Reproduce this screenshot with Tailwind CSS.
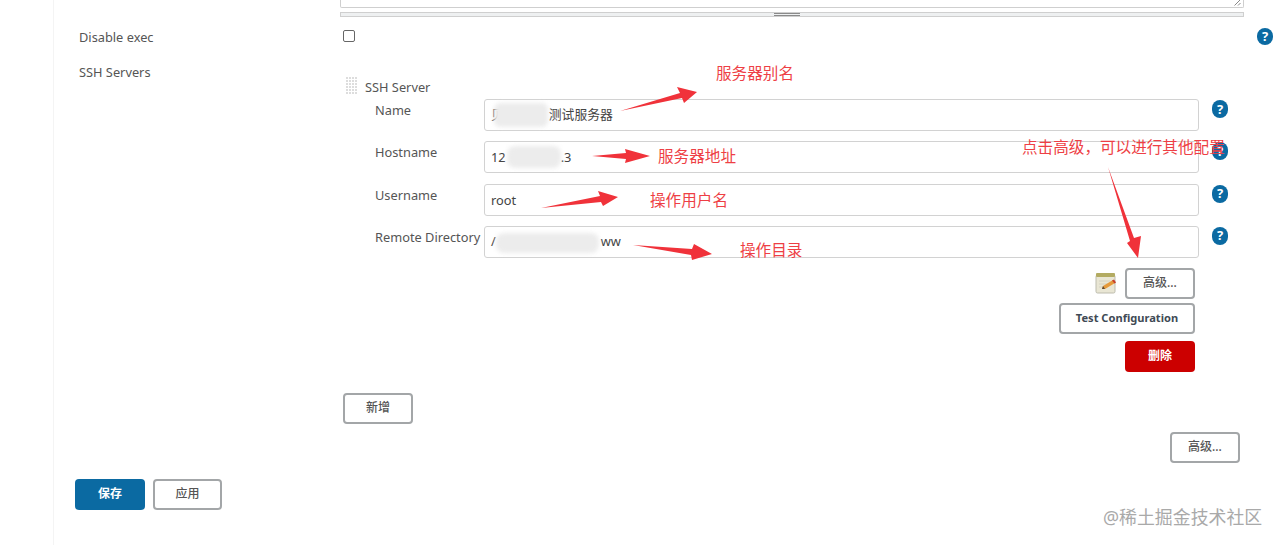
<!DOCTYPE html>
<html lang="zh">
<head>
<meta charset="utf-8">
<title>SSH Server</title>
<script src="https://cdn.jsdelivr.net/npm/@tailwindcss/browser@4"></script>
</head>
<body class="bg-white overflow-hidden">
<div class="relative flex h-[545px] w-[1280px] overflow-hidden bg-white font-['Noto_Sans','Noto_Sans_CJK_SC',sans-serif] text-[12.8px] text-[#555]">
  <!-- left rail -->
  <div class="w-[54px] shrink-0 border-r border-[#f4f4f4]"></div>

  <!-- form -->
  <div class="relative flex-1">
    <div class="ml-[286px] w-[904px]">
      <div class="relative h-[8px] rounded-b-[2px] border border-t-0 border-[#cfcfcf]">
        <svg class="absolute right-[2px] bottom-[1px]" width="7" height="7" viewBox="0 0 7 7"><path d="M0.5 6.5L6.5 0.5M4 6.5L6.5 4" stroke="#888" fill="none"/></svg>
      </div>
      <div class="mt-[4px] flex h-[5px] items-center justify-center border-x border-y border-[#cfcfcf] bg-[#eef0f1]">
        <div class="ml-[-10px] h-[3px] w-[26px] border-y border-[#8a8a8a]"></div>
      </div>
    </div>

    <!-- Disable exec -->
    <div class="mt-[8px] flex h-[24px]">
      <div class="w-[286px] pl-[25px] leading-[24px]">Disable exec</div>
      <div class="flex-1 pl-[3px] pt-[4px]"><div class="mt-[1px] h-[12px] w-[12px] rounded-[2px] border border-[#666] bg-white"></div></div>
      <div class="mr-[7px] mt-[3px]">
        <div class="flex h-[17px] w-[16px] items-center justify-center rounded-full bg-[#0b6aa2] text-[13px] leading-none font-bold text-white">?</div>
      </div>
    </div>

    <!-- SSH Servers -->
    <div class="mt-[11px] flex">
      <div class="w-[286px] pl-[25px] leading-[24px]">SSH Servers</div>
      <div class="flex-1">
        <div class="ml-[6px] mt-[17px] flex items-center gap-[8px]">
          <div class="grid h-[20px] w-[11px] grid-cols-[repeat(4,2px)] grid-rows-[repeat(6,2px)] gap-[1px]">
            <i class="bg-[#ddd]"></i><i class="bg-[#ddd]"></i><i class="bg-[#ddd]"></i><i class="bg-[#ddd]"></i>
            <i class="bg-[#ddd]"></i><i class="bg-[#ddd]"></i><i class="bg-[#ddd]"></i><i class="bg-[#ddd]"></i>
            <i class="bg-[#ddd]"></i><i class="bg-[#ddd]"></i><i class="bg-[#ddd]"></i><i class="bg-[#ddd]"></i>
            <i class="bg-[#ddd]"></i><i class="bg-[#ddd]"></i><i class="bg-[#ddd]"></i><i class="bg-[#ddd]"></i>
            <i class="bg-[#ddd]"></i><i class="bg-[#ddd]"></i><i class="bg-[#ddd]"></i><i class="bg-[#ddd]"></i>
            <i class="bg-[#ddd]"></i><i class="bg-[#ddd]"></i><i class="bg-[#ddd]"></i><i class="bg-[#ddd]"></i>
          </div>
          <span class="leading-[20px]">SSH Server</span>
        </div>

        <div class="mt-[2px] flex flex-col gap-[10.3px]">
          <div class="flex">
            <div class="w-[144px] shrink-0 pl-[35px] leading-[22px]">Name</div>
            <div class="relative flex h-[32px] w-[715px] items-center rounded-[3px] border border-[#d2d2d2] pl-[6px] text-[12.8px] text-[#444]">
              <span>贝</span><span class="ml-[45px]">测试服务器</span>
              <div class="absolute left-[9px] top-[3px] h-[24px] w-[54px] rounded-[6px] bg-[#ececec] blur-[2px]"></div>
            </div>
            <div class="ml-[13px] mt-[1px] flex h-[18px] w-[16px] items-center justify-center rounded-full bg-[#0b6aa2] text-[13px] leading-none font-bold text-white">?</div>
          </div>
          <div class="flex">
            <div class="w-[144px] shrink-0 pl-[35px] leading-[22px]">Hostname</div>
            <div class="relative flex h-[32px] w-[715px] items-center rounded-[3px] border border-[#d2d2d2] pl-[6px] text-[12.8px] text-[#444]">
              <span>12</span><span class="ml-[55px]">.3</span>
              <div class="absolute left-[22px] top-[4px] h-[22px] w-[54px] rounded-[8px] bg-[#ececec] blur-[2px]"></div>
            </div>
            <div class="ml-[13px] mt-[1px] flex h-[18px] w-[16px] items-center justify-center rounded-full bg-[#0b6aa2] text-[13px] leading-none font-bold text-white">?</div>
          </div>
          <div class="flex">
            <div class="w-[144px] shrink-0 pl-[35px] leading-[22px]">Username</div>
            <div class="flex h-[32px] w-[715px] items-center rounded-[3px] border border-[#d2d2d2] pl-[6px] pt-[1px] text-[12.8px] text-[#444]">root</div>
            <div class="ml-[13px] mt-[1px] flex h-[18px] w-[16px] items-center justify-center rounded-full bg-[#0b6aa2] text-[13px] leading-none font-bold text-white">?</div>
          </div>
          <div class="flex">
            <div class="w-[144px] shrink-0 pl-[35px] leading-[22px] whitespace-nowrap">Remote Directory</div>
            <div class="relative flex h-[32px] w-[715px] items-center rounded-[3px] border border-[#d2d2d2] pl-[6px] text-[12.8px] text-[#444]">
              <span>/</span><span class="ml-[105px]">ww</span>
              <div class="absolute left-[11px] top-[6px] h-[20px] w-[103px] rounded-[8px] bg-[#ececec] blur-[2px]"></div>
            </div>
            <div class="ml-[13px] mt-[1px] flex h-[18px] w-[16px] items-center justify-center rounded-full bg-[#0b6aa2] text-[13px] leading-none font-bold text-white">?</div>
          </div>
        </div>

        <!-- server buttons -->
        <div class="mt-[10px] w-[855px] flex flex-col items-end">
          <div class="flex items-center gap-[8px]">
            <svg width="22" height="22" viewBox="0 0 22 22">
              <rect x="1" y="3" width="19" height="18" rx="1.5" fill="#e9e6d4" stroke="#bdbcae"/>
              <rect x="1" y="1" width="19" height="4" rx="1" fill="#b3ab62"/>
              <path d="M4 9h11M4 12h9M4 15h7" stroke="#d4d2c2"/>
              <path d="M7 17l1-3 10-6 2 3-10 6z" fill="#e59a3c"/>
              <path d="M17 8.500l2-1 2 3-1.500 1z" fill="#c8402c"/>
              <path d="M7 17l1-3 2 3z" fill="#5c4a38"/>
            </svg>
            <div class="flex h-[31px] w-[70px] items-center justify-center rounded-[4px] border-2 border-[#a3a6a8] text-[12px] font-medium text-[#555]">高级...</div>
          </div>
          <div class="mt-[4px] flex h-[31px] w-[136px] items-center justify-center rounded-[4px] border-2 border-[#a3a6a8] text-[11.1px] font-bold text-[#3f4a55]">Test Configuration</div>
          <div class="mt-[7px] flex h-[31px] w-[70px] items-center justify-center rounded-[4px] bg-[#cc0000] text-[12px] font-bold text-white">删除</div>
        </div>

        <div class="ml-[3px] mt-[21px] flex h-[31px] w-[70px] items-center justify-center rounded-[4px] border-2 border-[#a3a6a8] text-[12px] font-medium text-[#555]">新增</div>

        <div class="ml-[830px] mt-[8px] flex h-[31px] w-[70px] items-center justify-center rounded-[4px] border-2 border-[#a3a6a8] text-[12px] font-medium text-[#555]">高级...</div>
      </div>
    </div>

    <!-- bottom bar -->
    <div class="ml-[21px] mt-[16px] flex gap-[8px]">
      <div class="flex h-[31px] w-[70px] items-center justify-center rounded-[4px] bg-[#0b6aa2] text-[12px] font-bold text-white">保存</div>
      <div class="flex h-[31px] w-[69px] items-center justify-center rounded-[4px] border-2 border-[#a3a6a8] text-[12px] font-medium text-[#555]">应用</div>
    </div>
  </div>

  <!-- red annotations over the screenshot -->
  <svg class="pointer-events-none absolute inset-0" width="1280" height="545" viewBox="0 0 1280 545">
    <g fill="#f0323a">
      <polygon points="620,111 680,93 677,87 697,92 684,103 682,98"/>
      <polygon points="592,156 626,153 625,149 650,156 625,163 626,159"/>
      <polygon points="541,208 600,196 598,191 618,197 603,206 601,202"/>
      <polygon points="633,245 692,249 694,244 712,254 692,260 691,255"/>
      <polygon points="1108,167 1134,238 1141,236 1138,258 1127,243 1130,241"/>
    </g>
  </svg>
  <div class="absolute left-[716px] top-[62px] text-[15.6px] leading-[23px] text-[#ee3f45]">服务器别名</div>
  <div class="absolute left-[658px] top-[145px] text-[15.6px] leading-[23px] text-[#ee3f45]">服务器地址</div>
  <div class="absolute left-[650px] top-[189px] text-[15.6px] leading-[23px] text-[#ee3f45]">操作用户名</div>
  <div class="absolute left-[740px] top-[239px] text-[15.6px] leading-[23px] text-[#ee3f45]">操作目录</div>
  <div class="absolute left-[1022px] top-[136px] whitespace-nowrap text-[15.6px] leading-[23px] text-[#ee3f45]">点击高级，可以进行其他配置</div>
  <div class="absolute left-[1103px] top-[504px] whitespace-nowrap text-[17.9px] leading-[26px] text-[#a9a9a9]">@稀土掘金技术社区</div>
</div>
</body>
</html>
